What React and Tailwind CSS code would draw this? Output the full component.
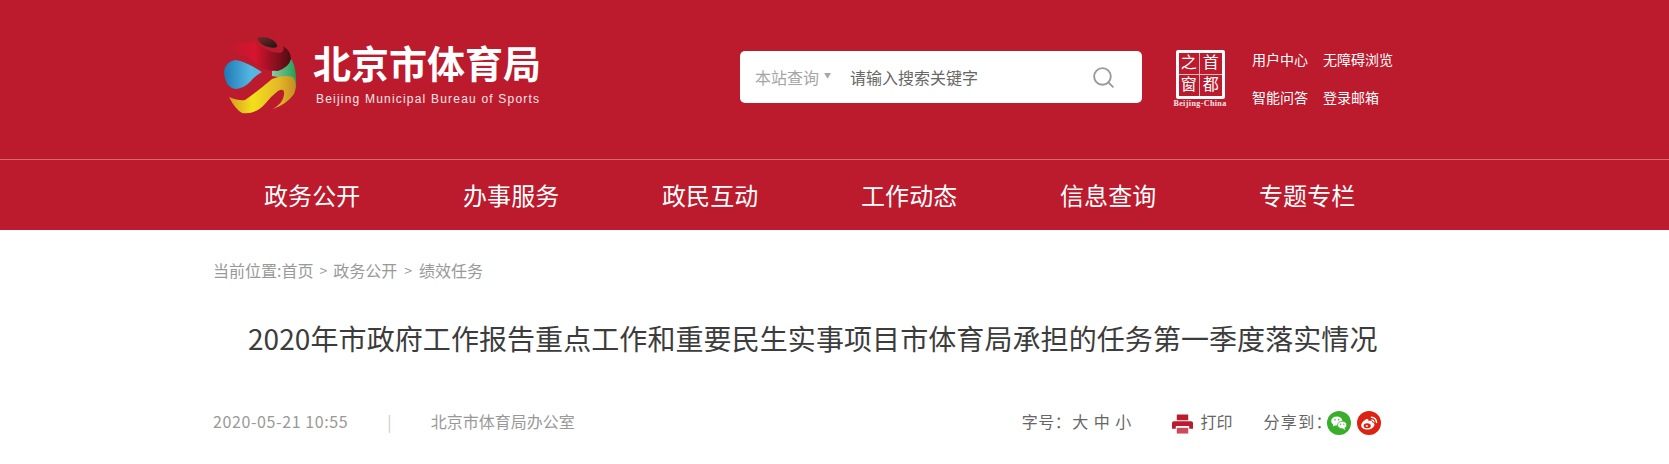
import { Search } from 'lucide-react';

const navItems = ['政务公开', '办事服务', '政民互动', '工作动态', '信息查询', '专题专栏'];

const cjk = { fontFamily: '"Noto Sans CJK SC", "Liberation Sans", sans-serif' };

const Logo = () => (
  <svg width="90" height="90" viewBox="0 0 90 90" className="shrink-0">
    <defs>
      <linearGradient id="drop" x1="0" y1="0" x2="1" y2="0">
        <stop offset="0" stopColor="#1f78b4" />
        <stop offset="0.7" stopColor="#54b7e2" />
      </linearGradient>
      <linearGradient id="swoosh" x1="0" y1="0" x2="1" y2="0">
        <stop offset="0" stopColor="#bb1b2e" stopOpacity="0.2" />
        <stop offset="0.5" stopColor="#d8142f" />
        <stop offset="0.85" stopColor="#7a0f1c" />
        <stop offset="1" stopColor="#4d0d14" />
      </linearGradient>
      <linearGradient id="yellow" x1="0" y1="0" x2="1" y2="0">
        <stop offset="0" stopColor="#d99a1f" />
        <stop offset="0.35" stopColor="#f2e01c" />
        <stop offset="0.75" stopColor="#e3b826" />
        <stop offset="1" stopColor="#c98a22" />
      </linearGradient>
      <linearGradient id="green" x1="0" y1="0" x2="1" y2="0">
        <stop offset="0" stopColor="#8fc9a0" />
        <stop offset="1" stopColor="#1fa055" />
      </linearGradient>
      <linearGradient id="dark" x1="0" y1="0" x2="1" y2="1">
        <stop offset="0" stopColor="#7a2a2a" />
        <stop offset="1" stopColor="#1d1616" />
      </linearGradient>
    </defs>
    <path d="M57 42 L73 35 L76 30 Q82 38 81 60 Q72 48 57 47 Z" fill="url(#green)" />
    <path d="M9 43 Q10 33 20 31 Q30 32 47 43 Q40 47 35 53 Q28 60 20 60 Q10 58 9 43 Z" fill="url(#drop)" />
    <path d="M3 15 Q25 14 41 13 Q48 22 64 24 Q70 23 68 17 Q76 22 76 30 Q74 38 63 42 Q55 42 48 40 Q40 34 35 29 Q20 22 3 15 Z" fill="url(#swoosh)" />
    <path d="M42 9 Q50 6 58 11 Q63 15 62 18 Q58 20 50 17 Q44 14 42 9 Z" fill="url(#dark)" />
    <path d="M14 68 Q24 72 30 71 Q43 62 57 50 Q68 45 78 48 Q83 55 79 65 Q72 75 58 80 Q68 74 69 66 Q70 58 63 62 Q55 68 50 75 Q40 86 27 84 Q20 80 14 68 Z" fill="url(#yellow)" />
  </svg>
);

const BeijingChinaSeal = () => (
  <div className="flex flex-col items-center w-[54px]">
    <div className="w-[49px] h-[49px] border-[3px] border-white rounded-[2px] grid grid-cols-2 grid-rows-2 text-white text-[16px] leading-none" style={{ fontFamily: '"Liberation Serif", "Noto Sans CJK SC", serif' }}>
      <span className="flex items-center justify-center border-r border-b border-white/70">之</span>
      <span className="flex items-center justify-center border-b border-white/70">首</span>
      <span className="flex items-center justify-center border-r border-white/70">窗</span>
      <span className="flex items-center justify-center">都</span>
    </div>
    <span className="text-[8px] leading-[8px] mt-[1px] font-bold text-white/90 tracking-[0.4px] whitespace-nowrap" style={{ fontFamily: '"Liberation Serif", serif' }}>Beijing-China</span>
  </div>
);

const PrintIcon = () => (
  <svg width="21" height="20" viewBox="0 0 22 20" className="shrink-0">
    <rect x="5" y="0" width="12" height="6" rx="0.5" fill="#bc1a2d" />
    <path d="M2 7 H20 Q22 7 22 9 V15 H18 V12 H4 V15 H0 V9 Q0 7 2 7 Z" fill="#bc1a2d" />
    <rect x="5" y="14" width="12" height="6" fill="#cc4a5a" />
  </svg>
);

const WechatIcon = () => (
  <svg width="24" height="24" viewBox="0 0 24 24" className="shrink-0">
    <circle cx="12" cy="12" r="12" fill="#3aae2b" />
    <ellipse cx="9.8" cy="10" rx="5.6" ry="4.6" fill="#fff" />
    <path d="M6.5 13 L6 15.6 L9 14 Z" fill="#fff" />
    <ellipse cx="15.2" cy="14" rx="4.6" ry="3.8" fill="#fff" stroke="#3aae2b" strokeWidth="0.8" />
    <path d="M17.5 17 L18.4 19 L15.6 17.6 Z" fill="#fff" />
    <circle cx="8" cy="8.8" r="0.8" fill="#3aae2b" />
    <circle cx="11.6" cy="8.8" r="0.8" fill="#3aae2b" />
    <circle cx="13.6" cy="13.2" r="0.65" fill="#3aae2b" />
    <circle cx="16.8" cy="13.2" r="0.65" fill="#3aae2b" />
  </svg>
);

const WeiboIcon = () => (
  <svg width="24" height="24" viewBox="0 0 24 24" className="shrink-0">
    <circle cx="12" cy="12" r="12" fill="#dd2211" />
    <path d="M10.5 18.5 C6.8 18.5 4.2 16.8 4.2 14.4 C4.2 12.2 7.4 8.6 10 8 C11.4 7.8 11.8 9 11.4 10.2 C13.6 9.4 15.6 9.6 15.4 11.4 C17 11.9 17.6 12.8 17.4 14 C17 16.6 14 18.5 10.5 18.5 Z" fill="#fff" />
    <ellipse cx="10.2" cy="14.8" rx="3.6" ry="2.5" fill="#dd2211" />
    <circle cx="9.8" cy="15" r="1.1" fill="#fff" />
    <path d="M14.5 6.2 A5 5 0 0 1 19.5 11.4" fill="none" stroke="#fff" strokeWidth="1.5" strokeLinecap="round" />
    <path d="M14.8 8.8 A2.4 2.4 0 0 1 17 11" fill="none" stroke="#fff" strokeWidth="1.2" strokeLinecap="round" />
  </svg>
);

export default function App() {
  return (
    <div className="w-full min-h-[464px] bg-white overflow-hidden" style={cjk}>
      <header className="bg-[#bc1a2d]">
        <div className="h-[159px] pl-[215px] flex items-start">
          <div className="mt-[29px]"><Logo /></div>
          <div className="ml-[8px] mt-[37px] w-[240px] text-white">
            <div className="text-[38px] leading-[50px] font-bold whitespace-nowrap">北京市体育局</div>
            <div className="text-[12px] leading-[16px] mt-[4px] ml-[3px] tracking-[1.2px] whitespace-nowrap text-white/90" style={{ fontFamily: '"Liberation Sans", sans-serif' }}>Beijing Municipal Bureau of Sports</div>
          </div>
          <div className="ml-[187px] mt-[51px] w-[402px] h-[52px] bg-white rounded-[5px] flex items-center pl-[15px] pr-[26px]">
            <span className="text-[16px] text-[#a6a6a6]">本站查询</span>
            <span className="ml-[5px] mb-[3px] text-[7px] text-[#a6a6a6]">▼</span>
            <span className="ml-[19px] text-[16px] text-[#666666]">请输入搜索关键字</span>
            <Search className="ml-auto text-[#999999]" size={25} strokeWidth={1.8} />
          </div>
          <div className="ml-[31px] mt-[50px]"><BeijingChinaSeal /></div>
          <div className="ml-[25px] mt-[47px] grid grid-cols-[auto_auto] gap-x-[15px] gap-y-[14px] text-white text-[14px] leading-[24px]">
            <span>用户中心</span>
            <span>无障碍浏览</span>
            <span>智能问答</span>
            <span>登录邮箱</span>
          </div>
        </div>
        <nav className="h-[71px] border-t border-[#d86a76] pl-[264px] flex items-center gap-[102.6px] text-white text-[24px] tracking-[0.1px]">
          {navItems.map((item) => (
            <a key={item} className="whitespace-nowrap">{item}</a>
          ))}
        </nav>
      </header>

      <main className="pl-[213px] w-[1381px] box-content">
        <div className="mt-[28px] flex items-center text-[16px] leading-[24px] text-[#999999]">
          <span>当前位置:首页</span>
          <span className="mx-[6px] text-[14px]">&gt;</span>
          <span>政务公开</span>
          <span className="mx-[7px] text-[14px]">&gt;</span>
          <span>绩效任务</span>
        </div>
        <h1 className="mt-[34px] pl-[35px] text-[28px] leading-[44px] text-[#3c3c3c] tracking-[0.08px] whitespace-nowrap font-normal">2020年市政府工作报告重点工作和重要民生实事项目市体育局承担的任务第一季度落实情况</h1>
        <div className="mt-[47px] w-[1168px] flex items-center text-[16px] leading-[24px] text-[#999999]">
          <span className="tracking-[0.6px]">2020-05-21 10:55</span>
          <span className="ml-[39px] text-[#cccccc]">|</span>
          <span className="ml-[39px]">北京市体育局办公室</span>
          <span className="ml-auto text-[#666666] tracking-[0.5px]">字号：</span>
          <span className="ml-[1px] mr-[5px] text-[#666666] flex gap-[5.5px] whitespace-nowrap"><span>大</span><span>中</span><span>小</span></span>
          <span className="ml-[36px] mt-[6px]"><PrintIcon /></span>
          <span className="ml-[7px] text-[#666666]">打印</span>
          <span className="ml-[31px] text-[#666666] tracking-[1.4px]">分享到：</span>
          <span className="flex gap-[6px] -ml-[6px] mt-[4px]"><WechatIcon /><WeiboIcon /></span>
        </div>
      </main>
    </div>
  );
}
